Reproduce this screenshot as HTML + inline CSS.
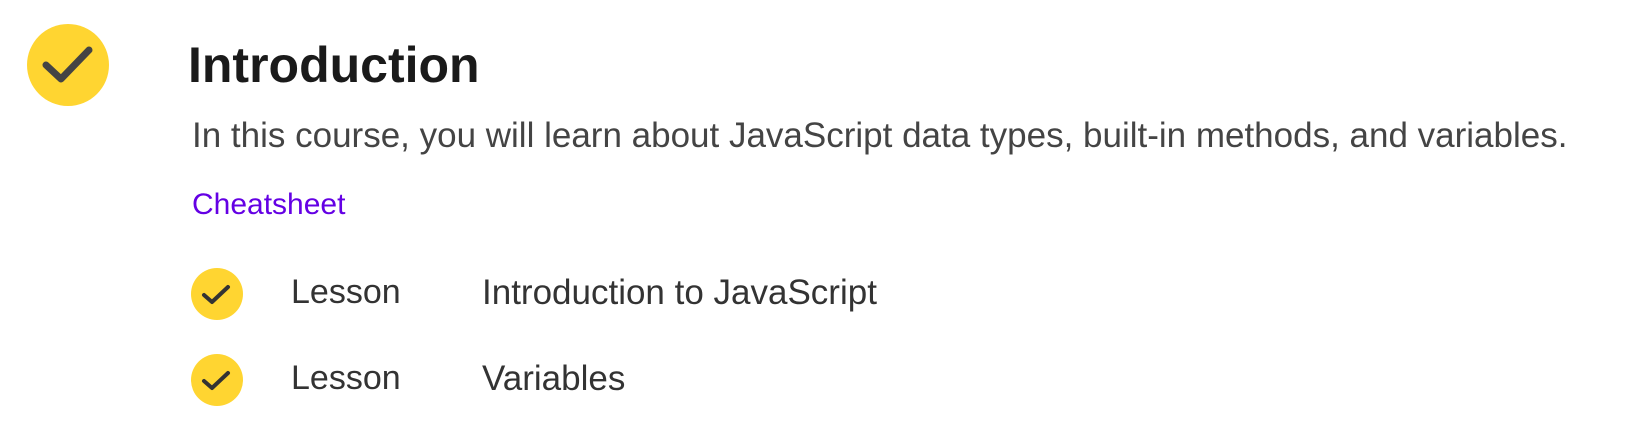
<!DOCTYPE html>
<html><head><style>
body{margin:0;width:1636px;height:426px;background:#fff;position:relative;overflow:hidden;font-family:"Liberation Sans",sans-serif}
.t{position:absolute;white-space:nowrap;line-height:1}
</style></head><body>
<svg style="position:absolute;left:0;top:0" width="1636" height="426">
<circle cx="68" cy="65" r="41" fill="#ffd531"/>
<path d="M46 65 L61 79 L89 50" stroke="#444" stroke-width="7" fill="none" stroke-linecap="round" stroke-linejoin="round"/>
<circle cx="217" cy="294" r="26" fill="#ffd531"/>
<path d="M204 295 L212 302 L228 287" stroke="#333" stroke-width="4" fill="none" stroke-linecap="round" stroke-linejoin="round"/>
<circle cx="217" cy="380" r="26" fill="#ffd531"/>
<path d="M204 381 L212 388 L228 373" stroke="#333" stroke-width="4" fill="none" stroke-linecap="round" stroke-linejoin="round"/>
</svg>
<div class="t" style="left:188px;top:40px;font-size:50px;font-weight:bold;color:#1a1a1a">Introduction</div>
<div class="t" style="left:192px;top:118px;font-size:35px;color:#444">In this course, you will learn about JavaScript data types, built-in methods, and variables.</div>
<div class="t" style="left:192px;top:190px;font-size:30px;color:#6400e4">Cheatsheet</div>
<div class="t" style="left:291px;top:275px;font-size:34px;color:#333">Lesson</div>
<div class="t" style="left:482px;top:275px;font-size:35px;color:#333">Introduction to JavaScript</div>
<div class="t" style="left:291px;top:361px;font-size:34px;color:#333">Lesson</div>
<div class="t" style="left:482px;top:361px;font-size:35px;color:#333">Variables</div>
</body></html>
